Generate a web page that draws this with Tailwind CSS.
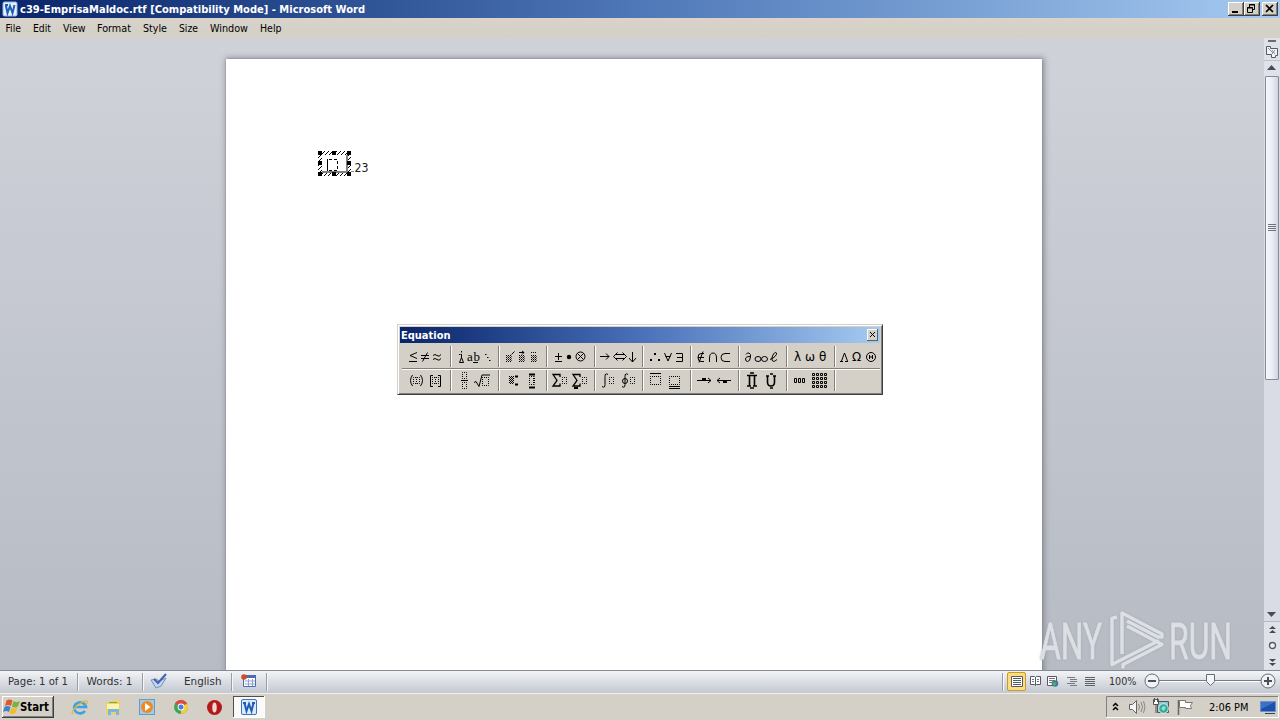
<!DOCTYPE html>
<html lang="en">
<head>
    <meta charset="UTF-8">
    <meta name="viewport" content="width=device-width, initial-scale=1.0">
    <title>c39-EmprisaMaldoc.rtf - Microsoft Word</title>
    <script src="https://cdn.jsdelivr.net/npm/@tailwindcss/browser@4"></script>
</head>
<body class="w-[1280px] h-[720px] overflow-hidden bg-[#d4d0c8] font-['DejaVu_Sans_Condensed','DejaVu_Sans',sans-serif] text-[11px] text-black">
<div class="relative flex flex-col w-[1280px] h-[720px]">

    <!-- Title bar -->
    <header class="flex items-center h-[18px] shrink-0 pl-[2px] pr-[2px] bg-linear-to-r from-[#0a246a] via-[#4f78b8] to-[#a6caf0] text-white">
        <svg class="w-4 h-4 shrink-0" viewBox="0 0 16 16">
            <rect x="1" y="1" width="14" height="14" rx="1.5" fill="#e8f1fb" stroke="#8db5e2"/>
            <path d="M3 4h3M3.800 4l1.700 8 2.500-7 2.500 7 2-8" fill="none" stroke="#1d5fb4" stroke-width="2"/>
        </svg>
        <svg class="h-[18px] w-[360px] ml-[2px]"><text x="0" y="13" textLength="345" lengthAdjust="spacingAndGlyphs" fill="#fff" font-weight="bold" font-size="11">c39-EmprisaMaldoc.rtf [Compatibility Mode] - Microsoft Word</text></svg>
        <div class="flex ml-auto">
            <svg class="w-4 h-[14px]" viewBox="0 0 16 14"><path d="M0 0h16v14H0z" fill="#404040"/><path d="M0 0h15v13H0z" fill="#fff"/><path d="M1 1h14v12H1z" fill="#808080"/><path d="M1 1h13v11H1z" fill="#d4d0c8"/><path d="M4 9h6v2H4z"/></svg>
            <svg class="w-4 h-[14px]" viewBox="0 0 16 14"><path d="M0 0h16v14H0z" fill="#404040"/><path d="M0 0h15v13H0z" fill="#fff"/><path d="M1 1h14v12H1z" fill="#808080"/><path d="M1 1h13v11H1z" fill="#d4d0c8"/><path d="M5.500 5V2.500h5v5H9M5 3h6M3.500 5.500h5v5h-5zM3 6h6" fill="none" stroke="#000"/></svg>
            <svg class="w-4 h-[14px] ml-[2px]" viewBox="0 0 16 14"><path d="M0 0h16v14H0z" fill="#404040"/><path d="M0 0h15v13H0z" fill="#fff"/><path d="M1 1h14v12H1z" fill="#808080"/><path d="M1 1h13v11H1z" fill="#d4d0c8"/><path d="M4 3l7 7M11 3l-7 7" stroke="#000" stroke-width="1.700"/></svg>
        </div>
    </header>

    <!-- Menu -->
    <nav class="h-5 shrink-0 bg-linear-to-b from-[#dcd2c9] via-[#d4d1c9] to-[#d4d1c4]">
        <svg class="w-[300px] h-5" font-size="11">
            <text x="5.500" y="14" textLength="15.500" lengthAdjust="spacingAndGlyphs">File</text>
            <text x="33" y="14" textLength="18" lengthAdjust="spacingAndGlyphs">Edit</text>
            <text x="63" y="14" textLength="22.500" lengthAdjust="spacingAndGlyphs">View</text>
            <text x="97" y="14" textLength="34" lengthAdjust="spacingAndGlyphs">Format</text>
            <text x="143" y="14" textLength="24" lengthAdjust="spacingAndGlyphs">Style</text>
            <text x="179" y="14" textLength="19" lengthAdjust="spacingAndGlyphs">Size</text>
            <text x="210" y="14" textLength="38" lengthAdjust="spacingAndGlyphs">Window</text>
            <text x="260" y="14" textLength="21.500" lengthAdjust="spacingAndGlyphs">Help</text>
        </svg>
    </nav>

    <!-- Workspace -->
    <main class="flex h-[632px] shrink-0">
        <div class="flex-1 overflow-hidden pt-[21px] pl-[226px] bg-linear-to-b from-[#cfd2d9] to-[#b7bbc4]">
            <div class="w-[816px] h-[640px] bg-white shadow-[0_0_1px_#777a80,1px_0_6px_1px_#85888e] pt-[90px] pl-[91px]">
                <svg class="w-[60px] h-[30px]" viewBox="317 149 60 30">
                    <defs><pattern id="hatch" width="4" height="4" patternUnits="userSpaceOnUse"><path d="M-1 5L5 -1M-1 1L1 -1M3 5L5 3" stroke="#000" stroke-width="1"/></pattern></defs>
                    <path d="M318 151h33v25h-33zM322 155v17h25v-17z" fill="url(#hatch)" fill-rule="evenodd"/>
                    <path d="M347 155v17H322" fill="none" stroke="#808080" stroke-width="2"/>
                    <path d="M318 151h4v4h-4zM332 151h4v4h-4zM347 151h4v4h-4zM318 161h4v4h-4zM347 161h4v4h-4zM318 172h4v4h-4zM332 172h4v4h-4zM347 172h4v4h-4z"/>
                    <path d="M327.500 171v-12" stroke="#000"/>
                    <path d="M329 159.500h8.500v11h-8.500" fill="none" stroke="#000" stroke-dasharray="3 2"/>
                    <path d="M351 171.500h3" stroke="#888"/>
                    <text x="354.500" y="172" font-size="11.500" textLength="14" lengthAdjust="spacingAndGlyphs" fill="#222">23</text>
                </svg>
            </div>
        </div>
        <!-- Scrollbar -->
        <aside class="flex flex-col items-center w-4 shrink-0 bg-[#d9dce4]">
            <svg class="w-4 h-[38px]" viewBox="0 0 16 38">
                <path d="M0 0h16v38H0z" fill="#dfe2e9"/>
                <path d="M4 3h8" stroke="#666b75" stroke-width="2"/>
                <path d="M2.500 8.500h4v2h7v7h-2v2h-4v-3h-5z" fill="#f4f5f7" stroke="#555a64"/>
                <path d="M4 10l5 5M8 12l3 4M11 12l-3 4" stroke="#8c919a"/>
                <path d="M0 22.500h16" stroke="#bcc1ca"/>
                <path d="M3 32l4.500-5 4.500 5z" fill="#444b59"/>
            </svg>
            <div class="flex flex-col items-center justify-center gap-px w-[14px] h-[304px] pb-[2px] border border-[#858b98] rounded-[1px] bg-linear-to-r from-[#f6f7fb] via-[#eceef6] to-[#d0d4e0]">
                <i class="w-2 h-px bg-[#6d7380]"></i><i class="w-2 h-px bg-[#6d7380]"></i><i class="w-2 h-px bg-[#6d7380]"></i><i class="w-2 h-px bg-[#6d7380]"></i>
            </div>
            <svg class="w-4 h-[62px] mt-auto" viewBox="0 608 16 62">
                <path d="M3 612h9l-4.500 5z" fill="#444b59"/>
                <path d="M0 622h16v48H0z" fill="#dfe2e9"/>
                <path d="M0 621.500h16" stroke="#b4b9c3"/>
                <path d="M5 629l3.500-3 3.500 3zM5 633l3.500-3 3.500 3zM5 659l3.500 3 3.500-3zM5 663l3.500 3 3.500-3z" fill="#444b59"/>
                <circle cx="8.500" cy="645.500" r="3" fill="#eef0f4" stroke="#555c69" stroke-width="1.300"/>
            </svg>
        </aside>
    </main>

    <!-- Status bar -->
    <section class="relative flex h-[23px] shrink-0 border-t border-[#868a93] bg-linear-to-b from-[#f3f4f7] via-[#dadde3] to-[#c4c8d0] text-[#333]">
        <svg class="w-[280px] h-[22px]" viewBox="0 671 280 22" font-size="11" fill="#333">
            <text x="8" y="685" textLength="60" lengthAdjust="spacingAndGlyphs">Page: 1 of 1</text>
            <text x="86.500" y="685" textLength="46" lengthAdjust="spacingAndGlyphs">Words: 1</text>
            <text x="184" y="685" textLength="37.500" lengthAdjust="spacingAndGlyphs">English</text>
            <path d="M77.500 673v18M142.500 673v18M231.500 673v18M266.500 673v18" stroke="#9a9ea8"/>
            <path d="M78.500 673v18M143.500 673v18M232.500 673v18M267.500 673v18" stroke="#f5f6f8"/>
            <path d="M151 680l5-1 3 2 7-3-5 8-5 2z" fill="#c5d5ee" stroke="#6f8fc2"/>
            <path d="M154 679l4 4 8-9" fill="none" stroke="#3f66aa" stroke-width="2"/>
            <path d="M243.500 675.500h12v11h-12z" fill="#fff" stroke="#4c6cae"/>
            <path d="M243 675h13v3h-13z" fill="#4c6cae"/>
            <path d="M245 681h10M245 684h10M248.500 679v7M252.500 679v7" stroke="#8ea5d0"/>
            <circle cx="244" cy="677" r="2.800" fill="#d04a2e"/>
        </svg>
        <svg class="w-[280px] h-[22px] ml-auto" viewBox="1000 671 280 22" font-size="11" fill="#333">
            <path d="M1002.500 673v18" stroke="#9a9ea8"/><path d="M1003.500 673v18" stroke="#f8f9fb"/>
            <rect x="1007.500" y="672.500" width="18" height="18" rx="1.500" fill="#fcdc7b" stroke="#c79a32"/>
            <path d="M1011.500 676.500h11v10h-11z" fill="#fff" stroke="#555a66"/>
            <path d="M1013 678.500h8M1013 680.500h8M1013 682.500h8M1013 684.500h8" stroke="#555a66"/>
            <path d="M1030.500 676.500h4l1 1 1-1h4v8h-4l-1 1-1-1h-4zM1035.500 677v8" fill="#fff" stroke="#555a66"/>
            <path d="M1032 679.500h2M1032 681.500h2M1037 679.500h2M1037 681.500h2" stroke="#777"/>
            <path d="M1047.500 676.500h9v9h-9z" fill="#fff" stroke="#555a66"/>
            <path d="M1049 678.500h6M1049 680.500h6M1049 682.500h4" stroke="#777"/>
            <circle cx="1055" cy="683.500" r="3.300" fill="#3f7e9c"/><path d="M1053 683l2-1 1 2-2 2z" fill="#62b45e"/>
            <path d="M1067 677.500h8M1070 679.500h7M1070 681.500h7M1067 683.500h8M1070 685.500h7" stroke="#777b85"/>
            <path d="M1085 677.500h10M1085 679.500h10M1085 681.500h10M1085 683.500h10M1085 685.500h10" stroke="#5c616c"/>
            <text x="1109" y="685" textLength="27.500" lengthAdjust="spacingAndGlyphs">100%</text>
            <path d="M1159 680.500h102" stroke="#777b85"/><path d="M1159 681.500h102" stroke="#fff"/>
            <circle cx="1152" cy="681" r="7" fill="#f1f2f5" stroke="#666b76"/><path d="M1148 681h8" stroke="#4a4f5a" stroke-width="2"/>
            <circle cx="1268" cy="681" r="7" fill="#f1f2f5" stroke="#666b76"/><path d="M1264 681h8M1268 677v8" stroke="#4a4f5a" stroke-width="2"/>
            <path d="M1206.500 674.500h8v7l-4 4-4-4z" fill="#f4f5f8" stroke="#666b76"/>
        </svg>
    </section>

    <!-- Taskbar -->
    <footer class="flex h-[27px] shrink-0 border-t border-[#f2f0ec] bg-[#d4d0c8]">
        <svg class="w-[280px] h-[26px]" viewBox="0 694 280 26">
            <path d="M2 696h52v22H2z" fill="#404040"/><path d="M2 696h51v21H2z" fill="#fff"/><path d="M3 697h50v20H3z" fill="#808080"/><path d="M3 697h49v19H3z" fill="#d4d0c8"/>
            <path d="M6.500 700.500q3-2 6 0l-1.500 5.500q-3-2-6 0z" fill="#e0592b"/><path d="M13.500 701q3 2 6.500 0l-2 5.500q-3 2-6 0z" fill="#75b63b"/>
            <path d="M4.500 707q3-2 6 0l-1.500 5q-3-2-6 0z" fill="#3c83cc"/><path d="M11.500 707.500q3 2 6 0l-2 5.500q-3 2-6 0z" fill="#f3bc2c"/>
            <text x="20" y="711" font-size="11.500" font-weight="bold" textLength="29" lengthAdjust="spacingAndGlyphs">Start</text>
            <!-- Internet Explorer -->
            <path d="M85 711a6 5.500 0 1 1 1-4H75" fill="none" stroke="#3da2df" stroke-width="2.600"/>
            <path d="M73 714q-3-2 4-8t10-5q1 1-1 4" fill="none" stroke="#e6b83a" stroke-width="1.300"/>
            <!-- Explorer -->
            <path d="M106 702h6l1-2h7v14h-14z" fill="#f0d067"/><path d="M107 704h12v5h-12z" fill="#fff2ae"/>
            <path d="M108 715v-6h11v6h-3v-3h-5v3z" fill="#79b7df"/><path d="M109 702h8v1h-8z" fill="#72ad52"/>
            <!-- Media player -->
            <rect x="139.500" y="699.500" width="15" height="15" fill="#9fcbea" stroke="#5f9fd0"/><circle cx="147" cy="707" r="6" fill="#f08a20"/><path d="M145 703l5.500 4-5.500 4z" fill="#fff"/>
            <!-- Chrome -->
            <circle cx="181" cy="707" r="7" fill="#3ea652"/><path d="M181 707L174.900 703.500A7 7 0 0 1 187.100 703.500z" fill="#dd4b3c"/><path d="M181 707l6.100-3.500A7 7 0 0 1 181 714z" fill="#f6cb3c"/><circle cx="181" cy="707" r="3.400" fill="#fff"/><circle cx="181" cy="707" r="2.500" fill="#4380dc"/>
            <!-- Opera -->
            <circle cx="214.500" cy="707.500" r="7.500" fill="#b31919"/><ellipse cx="214.500" cy="707.500" rx="2.200" ry="5" fill="#f3d8d2"/>
            <!-- Word -->
            <path d="M233 696h32v22h-32z" fill="#fff"/><path d="M233 696h31v21h-31z" fill="#505050"/><path d="M234 697h30v20h-30z" fill="#fbfaf9"/>
            <rect x="241.500" y="699.500" width="15" height="15" rx="1.500" fill="#dcebfa" stroke="#3b74ba"/>
            <path d="M243 703h3M244.500 703l2 8 2.500-7 2.500 7 2-8M252 703h3" fill="none" stroke="#1d5fb4" stroke-width="2"/>
        </svg>
        <svg class="w-[180px] h-[26px] ml-auto" viewBox="1100 694 180 26">
            <path d="M1106.500 717.500v-21H1278" fill="none" stroke="#808080"/><path d="M1106 717.500h172.500v-21" fill="none" stroke="#fff"/>
            <path d="M1113 706l2.500-2.500 2.500 2.500M1113 710l2.500-2.500 2.500 2.500" fill="none" stroke="#000" stroke-width="1.500"/>
            <path d="M1129.500 704.500h3l4-4v13l-4-4h-3z" fill="#f5f5f5" stroke="#666"/>
            <path d="M1138.500 704q2 3 0 6M1141 702q3 5 0 10M1143.500 701q3 6 0 12" fill="none" stroke="#888"/>
            <path d="M1157.500 701.500h11v11h-11z" fill="#8dc5cf" stroke="#555"/><path d="M1153.500 699.500h5v5h-5z" fill="#fff" stroke="#555"/><path d="M1154.500 698v4M1157.500 698v4M1156 705v8" stroke="#555"/><circle cx="1163.500" cy="708.500" r="4.800" fill="#38a69d" stroke="#d9f5f0"/><path d="M1161 709l2-3 3 1-2 4z" fill="#8fe0c8"/>
            <path d="M1178.500 715v-15" stroke="#666" stroke-width="1.500"/><path d="M1179.500 700.500h6v2h7l-2 3 1 3h-6v-1h-6z" fill="#fff" stroke="#777"/>
            <text x="1209" y="711" font-size="11" textLength="39.500" lengthAdjust="spacingAndGlyphs">2:06 PM</text>
            <path d="M1260.500 701.500h15v10h-15z" fill="#1d4fae" stroke="#6c90ca"/><path d="M1261 702h14l-14 7z" fill="#3a72c6"/><path d="M1265 713.500h10" stroke="#345"/>
        </svg>
    </footer>

    <!-- Equation toolbar, floats over the document -->
    <div class="absolute left-[397px] top-[324px] w-[486px] h-[71px] p-px border border-t-[#d4d0c8] border-l-[#d4d0c8] border-r-[#404040] border-b-[#404040] bg-[#d4d0c8] shadow-[inset_1px_1px_#fff,inset_-1px_-1px_#808080]">
        <div class="flex items-center justify-between h-[16px] mt-px mx-px pr-[2px] bg-linear-to-r from-[#0a246a] via-[#4a70b8] to-[#a6caf0]">
            <svg class="w-[60px] h-4"><text x="1" y="12" fill="#fff" font-size="11" font-weight="bold" textLength="49.500" lengthAdjust="spacingAndGlyphs">Equation</text></svg>
            <svg class="w-[11px] h-3" viewBox="0 0 11 12"><path d="M0 0h11v12H0z" fill="#606060"/><path d="M0 0h10v11H0z" fill="#fff"/><path d="M1 1h9v10H1z" fill="#d4d0c8"/><path d="M3 3l5 5M8 3l-5 5" stroke="#000"/></svg>
        </div>
        <div class="mt-[2px] ml-[3px] mr-px h-6 border-b border-[#858078] shadow-[0_1px_#fff]">
            <svg class="w-[480px] h-6" viewBox="402 345 480 24" fill="none" stroke="#000" font-size="13">
                <path d="M450.500 346v21M498.500 346v21M546.500 346v21M594.500 346v21M642.500 346v21M690.500 346v21M738.500 346v21M786.500 346v21M834.500 346v21" stroke="#858078"/>
                <path d="M451.500 346v21M499.500 346v21M547.500 346v21M595.500 346v21M643.500 346v21M691.500 346v21M739.500 346v21M787.500 346v21M835.500 346v21" stroke="#fff"/>
                <path d="M417 352.500l-7 3 7 3M409 361.500h8M421 355.500h8M421 358.500h8M427.500 352.500l-5 9M433 355.500q2-2 4 0t4-1M433 359.500q2-2 4 0t4-1"/>
                <path d="M459 354.500h1.500M461.500 351v1.500M461.500 354v4M459.500 362.500l2-5 2 5zM485 354.500h1.500M487 357.500h1.500M489 360.500h1.500"/>
                <g fill="#000" stroke="none" font-family="Liberation Serif"><text x="467" y="361" font-size="13">a</text><text x="473.500" y="361" font-size="13">b</text></g>
                <path d="M473 362.500h5"/>
                <path d="M506 355.500h6M506 357.500h6M506 359.500h6M506 361.500h6M519 355.500h6M519 357.500h6M519 359.500h6M519 361.500h6M531 355.500h6M531 357.500h6M531 359.500h6M531 361.500h6" stroke-dasharray="1 1"/>
                <path d="M507 356.500h5M507 358.500h5M507 360.500h5M520 356.500h5M520 358.500h5M520 360.500h5M532 356.500h5M532 358.500h5M532 360.500h5" stroke-dasharray="1 1" stroke="#555"/>
                <path d="M511.500 354.500l3-3M519 352.500h5l-2-1.500M524 352.500l-2 2"/><path d="M531 352.500h6" stroke-dasharray="1 1"/>
                <path d="M555 356.500h7M558.500 353v7M555 361.500h7"/><circle cx="569" cy="357" r="2.200" fill="#000" stroke="none"/><circle cx="580.500" cy="356.500" r="4.500"/><path d="M577.500 353.500l6 6M583.500 353.500l-6 6"/>
                <path d="M600 356.500h9M606 353.500l3 3-3 3M616 354.500h8M616 358.500h8M617.500 352.500l-4 4 4 4M622.500 352.500l4 4-4 4M632.500 352v10M629 358l3.500 4 3.500-4"/>
                <path d="M650 360h2M658 360h2M654 354h2" stroke-width="2"/><path d="M664.500 353l3.500 8 3.500-8M665.500 356.500h5M676 353.500h6.500v8H676M677 357.500h5"/>
                <path d="M704 353.500h-3q-3 0-3 4t3 4h3M698 357.500h6M703 351.500l-4 11M709.500 362v-4q0-5 3.500-5t3.500 5v4M730 353.500h-5q-4 0-4 4t4 4h5"/>
                <path d="M746 354.500q1-2 3-1.500 2 1 1.500 4-.5 4.500-3 4.500-2 0-2-2.500t4.500-2.500"/>
                <ellipse cx="758" cy="359" rx="3" ry="2.500"/><ellipse cx="764.500" cy="359" rx="3" ry="2.500"/>
                <path d="M770 359.500q7-3 6.500-6.500-1-2-3 1t-1.500 6q1 3 5-.5"/>
                <g fill="#000" stroke="none" font-family="DejaVu Sans" font-size="12"><text x="794" y="361">λ</text><text x="805" y="361">ω</text><text x="819" y="361">θ</text><text x="852" y="361">Ω</text></g>
                <path d="M840 361.500h3M845 361.500h3M841.500 361l3-8 3 8"/><circle cx="871" cy="357" r="4.500"/><path d="M869 357h4M869.500 355v4M872.500 355v4"/>
            </svg>
        </div>
        <div class="ml-[3px] mr-px h-6">
            <svg class="w-[480px] h-6" viewBox="402 369 480 24" fill="none" stroke="#000">
                <path d="M450.500 370v21M498.500 370v21M546.500 370v21M594.500 370v21M642.500 370v21M690.500 370v21M738.500 370v21M786.500 370v21M834.500 370v21" stroke="#858078"/>
                <path d="M451.500 370v21M499.500 370v21M547.500 370v21M595.500 370v21M643.500 370v21M691.500 370v21M739.500 370v21M787.500 370v21M835.500 370v21" stroke="#fff"/>
                <path d="M412.500 375q-4 5.500 0 11M420.500 375q4 5.500 0 11M433 375.500h-2.500v11h2.500M438 375.500h2.500v11h-2.500"/>
                <!-- empty slots -->
                <g stroke-dasharray="1 1" stroke-dashoffset=".5">
                    <path d="M413.500 377.500h6v6h-6zM416.500 377.500v6M432.500 377.500h6v6h-6zM435.500 377.500v6"/>
                    <path d="M462.500 372.500h4v6h-4zM462.500 382.500h4v6h-4zM482.500 377.500h6v8h-6z"/>
                    <path d="M529.500 376.500h4v8h-4zM534.500 376.500v8"/>
                    <path d="M562.500 377.500h4v6h-4zM582.500 377.500h4v6h-4zM609.500 377.500h4v6h-4zM630.500 377.500h4v6h-4z"/>
                    <path d="M650.500 376.500h10v8h-10zM669.500 376.500h10v8h-10z"/>
                </g>
                <path d="M509 376.500h5M510 377.500h4M509 378.500h5M510 379.500h4M509 380.500h5M510 381.500h4M509 382.500h5M510 383.500h4" stroke-dasharray="1 1"/>
                <path d="M461 380.500h7M474 382.500l2-1 3 5 3-11.500h8"/>
                <path d="M515 376.500h3M515 384.500h3M529 374.500h6M529 387.500h6" stroke-width="2"/>
                <path d="M560 377v-2.500h-7l4 6-4 5.500h7v-2.500M580 377v-2.500h-7l4 6-4 5.500h7v-2.500" stroke-width="1.300"/><path d="M574 388h4" stroke-width="2"/>
                <path d="M608 374.500q-3-2-3 2v8q0 4-3 2M628 374.500q-3-2-3 2v8q0 4-3 2"/><circle cx="625" cy="381" r="2.500"/>
                <path d="M650 373.500h11M669 386.500h11M669 388.500h11"/>
                <path d="M697 380.500h14M708 378l3 2.500-3 2.500M717 380.500h14M720 378l-3 2.500 3 2.500"/><path d="M702 379h4M723 382h4" stroke-width="2"/>
                <path d="M747 375.500h10M749.500 375v11M754.500 375v11M747 386h4M753 386h4M767.500 376v6q0 4 3.500 4t3.500-4v-6M766 376h3M773 376h3M750 373h4M750 388h4M770 374h3M770 388h3" stroke-width="1.600"/>
                <path d="M794.500 378.500h2v4h-2zM798.500 378.500h2v4h-2zM802.500 378.500h2v4h-2z"/>
                <path d="M812.500 373.500h2v2h-2zM816.500 373.500h2v2h-2zM820.500 373.500h2v2h-2zM824.500 373.500h2v2h-2zM812.500 377.500h2v2h-2zM816.500 377.500h2v2h-2zM820.500 377.500h2v2h-2zM824.500 377.500h2v2h-2zM812.500 381.500h2v2h-2zM816.500 381.500h2v2h-2zM820.500 381.500h2v2h-2zM824.500 381.500h2v2h-2zM812.500 385.500h2v2h-2zM816.500 385.500h2v2h-2zM820.500 385.500h2v2h-2zM824.500 385.500h2v2h-2z"/>
            </svg>
        </div>
    </div>

    <!-- ANY.RUN watermark -->
    <svg class="absolute left-[1030px] top-[590px] w-[230px] h-[90px] drop-shadow-[0_0_1px_#a4a8b1]" viewBox="1030 590 230 90" font-family="Roboto, sans-serif" font-size="50">
        <g fill="#dcdfe4" stroke="#dcdfe4" stroke-width=".8">
            <text x="1040" y="659" textLength="62" lengthAdjust="spacingAndGlyphs">ANY</text>
            <text x="1169" y="659" textLength="63" lengthAdjust="spacingAndGlyphs">RUN</text>
        </g>
        <g fill="none" stroke="#dcdfe4" stroke-width="3.500" stroke-linejoin="round">
            <path d="M1117 617l-5 1.500v46l47-24"/>
            <path d="M1122 654v-41l40 21v3h-4l-31-16"/>
            <path d="M1127 626l35 18.500-39 20v4"/>
        </g>
    </svg>
</div>
</body>
</html>
